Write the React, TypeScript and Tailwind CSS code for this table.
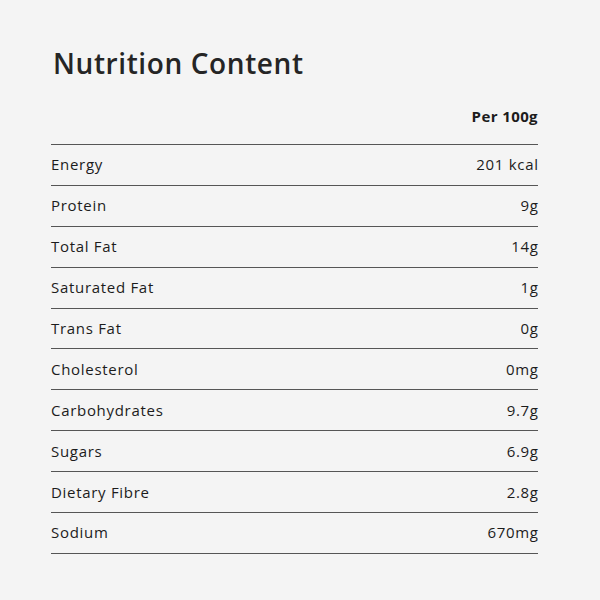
import React from "react";

const rows: [string, string][] = [
  ["Energy", "201 kcal"],
  ["Protein", "9g"],
  ["Total Fat", "14g"],
  ["Saturated Fat", "1g"],
  ["Trans Fat", "0g"],
  ["Cholesterol", "0mg"],
  ["Carbohydrates", "9.7g"],
  ["Sugars", "6.9g"],
  ["Dietary Fibre", "2.8g"],
  ["Sodium", "670mg"],
];

export default function App() {
  return (
    <div
      className="w-[600px] h-[600px] bg-[#f4f4f4] pl-[51px] pt-[44px] text-[#1c1c1c]"
      style={{ fontFamily: '"Open Sans", "Noto Sans", sans-serif' }}
    >
      <div className="w-[487px]">
        <h1 className="pl-[2px] text-[28px] leading-[38px] font-semibold tracking-[0.6px] text-[#252525]">
          Nutrition Content
        </h1>
        <div className="mt-[23px] h-[40px] flex items-start justify-end border-b border-[#555555] text-[15px] font-bold tracking-[0.4px]">
          <span className="leading-[20px] pt-[1px]">Per 100g</span>
        </div>
        {rows.map(([k, v]) => (
          <div
            key={k}
            className="h-[40.9px] pb-[1px] flex items-center justify-between border-b border-[#555555] text-[15px] leading-[20px] tracking-[0.7px]"
          >
            <span>{k}</span>
            <span className="-mr-[0.7px]">{v}</span>
          </div>
        ))}
      </div>
    </div>
  );
}
